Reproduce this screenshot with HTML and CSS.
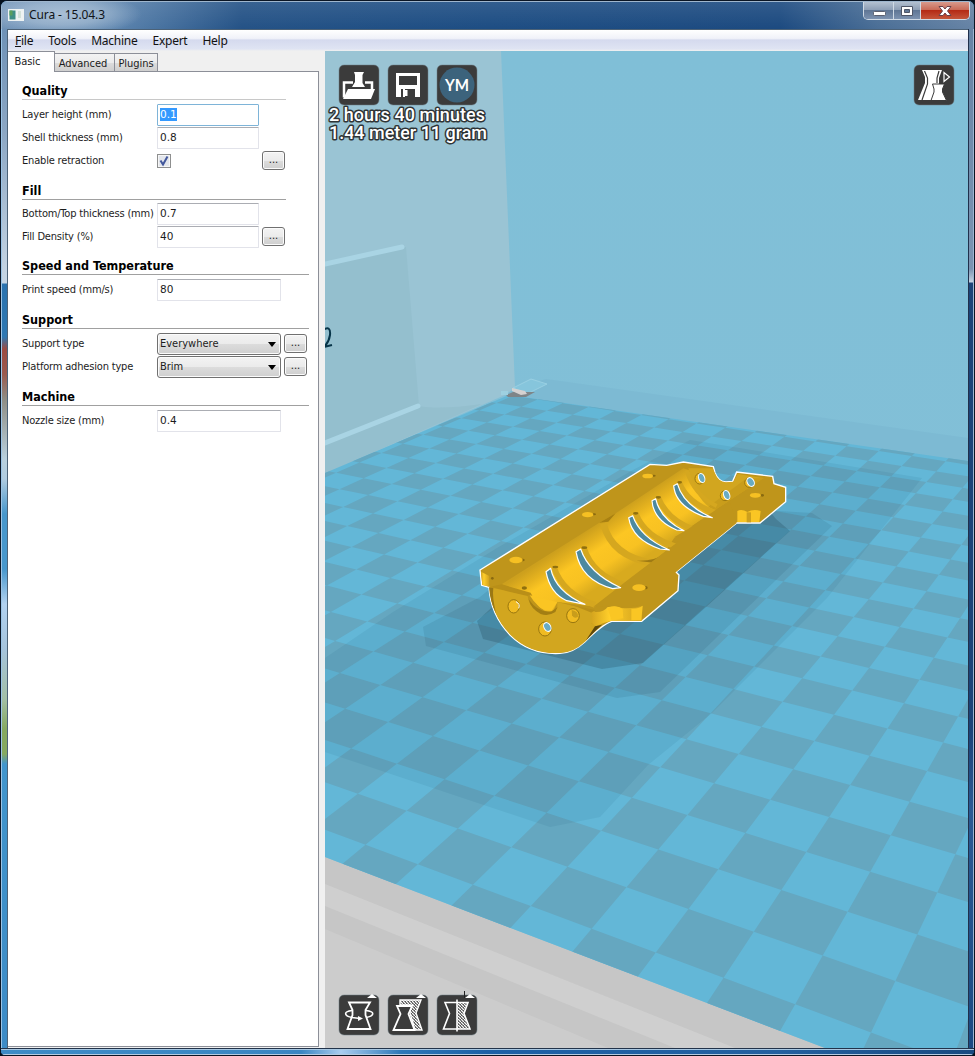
FILE: index.html
```html
<!DOCTYPE html>
<html lang="en">
<head>
<meta charset="utf-8">
<title>Cura - 15.04.3</title>
<link rel="stylesheet" href="styles.css">
</head>
<body>
<div class="window">
  <header class="titlebar">
    <svg class="app-icon" width="16" height="12" viewBox="0 0 16 12"><rect width="16" height="12" fill="#eef3f3"/><rect x="1.500" y="1.500" width="6" height="9" fill="#3f8f86"/><rect x="1.500" y="1.500" width="3" height="5" fill="#5a9f5c"/><path d="M10 2h3v7h-3z" fill="#d4e2da"/></svg>
    <span class="title">Cura - 15.04.3</span>
    <div class="win-buttons">
      <span class="wb wb-min"><svg width="29" height="19"><rect x="9.500" y="9.500" width="12" height="4" rx="1" fill="#fff" stroke="#5b6070"/></svg></span>
      <span class="wb wb-max"><svg width="26" height="19"><path d="M7.500 4.500h11v9h-11zM10.500 7.500v3h5v-3z" fill="#fff" stroke="#4f5668" fill-rule="evenodd"/></svg></span>
      <span class="wb wb-close"><svg width="48" height="19"><path d="M18 4.500h4l2 2.500 2-2.500h4L26.500 9l3.500 4.500h-4L24 11l-2 2.500h-4l3.500-4.500z" fill="#fff" stroke="#68404a"/></svg></span>
    </div>
  </header>
  <div class="body">
    <div class="edge edge-left"></div>
    <div class="client">
      <nav class="menu"><span><u>F</u>ile</span><span>Tools</span><span>Machine</span><span>Expert</span><span>Help</span></nav>
      <div class="main">
        <aside class="side">
          <div class="tabs"><span class="tab tab-on">Basic</span><span class="tab tab-adv">Advanced</span><span class="tab tab-plug">Plugins</span></div>
          <div class="panel">
            <h2 class="narrow light">Quality</h2>
            <div class="row"><label>Layer height (mm)</label><span class="field focus"><mark>0.1</mark></span></div>
            <div class="row"><label>Shell thickness (mm)</label><span class="field">0.8</span></div>
            <div class="row"><label>Enable retraction</label><span class="check"><svg width="14" height="14"><path d="M3.500 6.500L6 10.500 10.500 2.500" fill="none" stroke="#43589c" stroke-width="2"/></svg></span><span class="more">...</span></div>
            <h2 class="narrow snug">Fill</h2>
            <div class="row"><label>Bottom/Top thickness (mm)</label><span class="field">0.7</span></div>
            <div class="row"><label>Fill Density (%)</label><span class="field">40</span><span class="more">...</span></div>
            <h2 class="tight">Speed and Temperature</h2>
            <div class="row"><label>Print speed (mm/s)</label><span class="field wide">80</span></div>
            <h2>Support</h2>
            <div class="row"><label>Support type</label><span class="select">Everywhere</span><span class="more">...</span></div>
            <div class="row"><label>Platform adhesion type</label><span class="select">Brim</span><span class="more">...</span></div>
            <h2>Machine</h2>
            <div class="row"><label>Nozzle size (mm)</label><span class="field wide">0.4</span></div>
          </div>
        </aside>
        <section class="view">
          <svg class="scene" width="643" height="997" viewBox="325 51 643 997">
            <defs>
              <clipPath id="bed"><path d="M325 857L825 1048H968V461L509 395L325 473z"/></clipPath>
              <linearGradient id="back" x1="0" y1="0" x2="0" y2="1"><stop offset="0" stop-color="#80bfd7"/><stop offset="1" stop-color="#84c0d7"/></linearGradient>
              <linearGradient id="chan" gradientUnits="userSpaceOnUse" x1="255" y1="306" x2="342" y2="440"><stop offset="0" stop-color="#cda01d"/><stop offset=".22" stop-color="#e6b31f"/><stop offset=".4" stop-color="#fcc623"/><stop offset=".72" stop-color="#f8c222"/><stop offset="1" stop-color="#d8aa1e"/></linearGradient>
              <linearGradient id="roll" x1="0" y1="0" x2="1" y2="0"><stop offset="0" stop-color="#d5a51e"/><stop offset=".35" stop-color="#ffce2a"/><stop offset="1" stop-color="#d0a01c"/></linearGradient>
            </defs>
            <rect x="325" y="51" width="643" height="997" fill="url(#back)"/>
            <path d="M515 388L546 379L968 438V462L505 395z" fill="#7dbad3"/>
            <path d="M325 51H501L515 388L505 395L325 474z" fill="#9ac4d4"/>
            <path d="M325 262L406 247L419 406Q440 410 482 404L325 474z" fill="#94bfce"/>
            <path d="M325 264L402 247" stroke="#a9d4e4" stroke-width="5" stroke-linecap="round"/>
            <path d="M325 443L418 406" stroke="#a9d4e4" stroke-width="5" stroke-linecap="round"/>
            <path d="M323 330Q331 325 330 335Q329 342 324 347L332 345" fill="none" stroke="#073448" stroke-width="2"/>
            <path d="M325 857L825 1048H325z" fill="#c6c6c6"/>
            <path d="M325 884L735 1048H675L325 906z" fill="#cfcfcf"/>
            <path d="M325 929L608 1048H325z" fill="#cccccc"/>
            <g clip-path="url(#bed)">
              <rect x="325" y="390" width="643" height="658" fill="#63b7d7"/>
              <path id="squares" fill="#65a7c0"/>
              <path d="M325 658L393 612L497 548L633 470L690 440L922 478L827 598L712 713L648 765L600 817L550 827L325 752z" fill="#124a66" opacity=".08"/>
              <path d="M423 627L480 597L600 500L812 513L832 526L660 692L617 698L426 646z" fill="#12394a" opacity=".1"/>
              <path d="M477 621L500 600L760 500L776 519L790 531L706 607L643 663L602 669L483 639z" fill="#102f3c" opacity=".2"/>
            </g>
            <path d="M513 388L531 379L547 384L527 394z" fill="#86c5dc" stroke="#a2d5e6" stroke-width=".7"/>
            <path d="M506 395L513 392H535L526 397H508z" fill="#7e8588"/>
            <path d="M512 388L525 391L527 394L521 395L512 391z" fill="#d5d2d1"/>
            <path d="M501 391h7v4h-7z" fill="#9ed0e0"/>
            <g transform="translate(470 450) scale(.33333)">
              <path d="M30 360L540 43L590 46L640 36L730 50L735 68Q745 95 768 96L788 94L800 66L908 79L912 101L947 112V155L870 219H800L618 366L627 375L624 422L515 514H425Q395 525 345 575Q310 608 270 610Q180 615 120 555Q62 495 57 412L35 406z" fill="#bf951b" stroke="#fff" stroke-width="4"/>
              <path d="M95 403L388 218L437 190L640 55L655 60L740 178L612 265L585 305L375 470L262 456L245 492Q205 480 175 430z" fill="url(#chan)"/>
              <path d="M388 218L437 190L415 215z" fill="#a88012"/>
              <path d="M655 55L728 55L735 70Q745 96 768 97L790 95L803 72L880 84L735 180Q680 160 655 55z" fill="#d2a61f"/>
              <path d="M828 86L882 84L735 180L715 170z" fill="#c99d1b"/>
              <g fill="none" stroke="#d5a71f" stroke-width="17">
                <path d="M252 352Q278 430 375 465"/><path d="M342 294Q368 375 465 405"/>
                <path d="M400 220Q425 320 550 340" stroke-width="20"/><path d="M497 190Q525 262 620 290"/>
                <path d="M564 142Q590 208 670 238"/><path d="M627 96Q650 160 740 190"/><path d="M650 62Q672 135 740 168" stroke-width="12"/>
              </g>
              <path d="M500 332Q550 335 600 305L550 338z" fill="#8c6c11" opacity=".75"/>
              <path d="M585 305L640 263L612 262L650 240L740 178L780 160L800 219L618 366L515 467L370 470L480 385z" fill="#bf951b"/>
              <g fill="#4c89a0" stroke="#fff" stroke-width="3.500" stroke-linejoin="round">
                <path d="M228 365L242 355Q256 425 345 463L290 452Q240 430 228 365z"/>
                <path d="M318 305L332 297Q356 370 452 413L428 416Q332 390 318 305z"/>
                <path d="M476 203L488 197Q510 262 598 300L570 297Q486 268 476 203z"/>
                <path d="M546 152L557 146Q570 207 642 242L620 240Q550 210 546 152z"/>
                <path d="M611 107L622 101Q640 167 727 203L700 199Q616 167 611 107z"/>
              </g>
              <g fill="#90700f"><ellipse cx="256" cy="351" rx="9" ry="4"/><ellipse cx="343" cy="293" rx="9" ry="4"/><ellipse cx="497" cy="190" rx="8" ry="4"/><ellipse cx="565" cy="142" rx="8" ry="4"/><ellipse cx="629" cy="97" rx="7" ry="4"/><ellipse cx="163" cy="414" rx="8" ry="5"/></g>
              <path d="M62 410L95 403L182 428L187 437L175 435L173 440L100 421z" fill="#b98f18"/>
              <path d="M59 412L100 421L173 438Q177 480 230 495L262 475V456L300 464L375 484L365 522L395 524L345 575Q310 608 270 609Q180 613 121 554Q62 493 59 412z" fill="#d2a61f"/>
              <path d="M57 412L70 414Q66 440 78 490Q60 455 57 412z" fill="#9b7814"/>
              <path d="M176 448Q205 490 245 484L262 472L256 486Q235 500 212 492Q182 476 176 448z" fill="#a37e13"/>
              <path d="M190 440L262 456L245 482Q205 484 190 440z" fill="#fac523"/>
              <path d="M262 456L375 480L365 488L320 470z" fill="#b98f18"/>
              <path d="M33 365L58 378V410L37 405z" fill="url(#roll)"/>
              <path d="M365 485Q400 490 412 472Q435 466 455 474Q490 477 518 467L515 512H425Q400 517 378 529L365 520z" fill="url(#roll)"/>
              <path d="M412 474Q440 462 458 478L460 505L425 510z" fill="#fac624"/><path d="M484 476Q505 477 518 467L514 511H484z" fill="#fac624"/>
              <path d="M347 572L375 529L396 524Q378 540 347 572z" fill="#5e480b"/>
              <path d="M802 183Q815 176 832 186Q850 176 872 183L868 216H802z" fill="#fac624"/><path d="M830 187h13v30h-13z" fill="#cda01d"/>
              <g fill="#8a6a10"><ellipse cx="158" cy="330" rx="6" ry="4"/><ellipse cx="372" cy="193" rx="6" ry="3"/><ellipse cx="551" cy="77" rx="6" ry="3"/><ellipse cx="527" cy="413" rx="6" ry="5"/><ellipse cx="877" cy="136" rx="5" ry="4"/><ellipse cx="67" cy="385" rx="4" ry="4"/></g>
              <g fill="#f6c023"><ellipse cx="138" cy="330" rx="20" ry="10"/><ellipse cx="353" cy="194" rx="17" ry="8"/><ellipse cx="533" cy="78" rx="16" ry="7"/><ellipse cx="507" cy="413" rx="20" ry="10"/><ellipse cx="856" cy="136" rx="16" ry="7"/></g>
              <g fill="#f0bb22" stroke="#98750f" stroke-width="3"><ellipse cx="131" cy="469" rx="17" ry="20"/><ellipse cx="225" cy="537" rx="19" ry="21"/><ellipse cx="309" cy="497" rx="19" ry="21"/><ellipse cx="689" cy="86" rx="14" ry="16"/><ellipse cx="765" cy="137" rx="14" ry="15"/><ellipse cx="838" cy="98" rx="14" ry="14"/></g>
              <path d="M305 480Q326 484 324 500Q312 508 306 496z" fill="#c99d1b"/>
              <g fill="#69abc3" stroke="#fff" stroke-width="3"><ellipse cx="232" cy="531" rx="10" ry="14" transform="rotate(-30 232 531)"/><ellipse cx="695" cy="84" rx="9" ry="14" transform="rotate(-20 695 84)"/><ellipse cx="770" cy="135" rx="9" ry="14" transform="rotate(-20 770 135)"/><ellipse cx="842" cy="96" rx="10" ry="14" transform="rotate(-30 842 96)"/></g>
              <path d="M138 455Q152 462 146 475" fill="none" stroke="#fff" stroke-width="3"/>
            </g>
            <g class="stats"><text x="329" y="121" textLength="156">2 hours 40 minutes</text><text x="329" y="139" textLength="158">1.44 meter 11 gram</text></g>
          </svg>
          <div class="tools tools-top">
            <svg width="40" height="40"><rect class="tile" width="40" height="40" rx="5"/><path d="M15 7h10l-1.500 3v8l2.500 4H13l3-5v-7z" fill="#fff"/><path d="M14 17.500H5v15M26 17.500h7v7" fill="none" stroke="#fff" stroke-width="2.500"/><path d="M9 24h27l-4 10H4z" fill="#fff"/></svg>
            <svg width="40" height="40"><rect class="tile" width="40" height="40" rx="5"/><path d="M8 8h24v24h-5v-8H17v8h-2v-8h-2v8H8zM11 11v9h18v-9z" fill="#fff" fill-rule="evenodd"/><path d="M17 25h2.500v6H17z" fill="#fff"/></svg>
            <svg width="40" height="40"><rect class="tile" width="40" height="40" rx="5"/><circle cx="20" cy="20" r="17.500" fill="#3c637c"/><text class="ym" x="20" y="26" text-anchor="middle" textLength="24" lengthAdjust="spacingAndGlyphs">YM</text></svg>
          </div>
          <div class="tools tools-view">
            <svg width="40" height="40"><rect class="tile" width="40" height="40" rx="5"/><path d="M8 5h20l-3 8v6l3 16H4l7-17v-6z" fill="#fff"/><path d="M10.500 6l3 7v6L8 35M25 6l-2 7v5" fill="none" stroke="#3b3b3b" stroke-width="1.200"/><path d="M18.500 19h12l-2 5v3l4 8.500H17l3-8.500v-3z" fill="#fff" stroke="#3b3b3b" stroke-width="1"/><path d="M30 7.500v9l5.500-4.500z" fill="none" stroke="#fff" stroke-width="1.200"/></svg>
          </div>
          <div class="tools tools-bottom">
            <svg width="40" height="40"><rect class="tile" width="40" height="40" rx="5"/><path d="M10 7.500h21l-4.500 7.500v5l5 14H8.500l5-14v-5z" fill="none" stroke="#fff" stroke-width="1.800"/><path d="M13 15.500C4.500 16.500 4.500 20.500 13 22.500L21 23.500M27 15.500C36 16.500 36 20.500 27 22.500" fill="none" stroke="#fff" stroke-width="1.600"/><path d="M19 21l5 2.500-5 2.500z" fill="#fff"/><path d="M28 3l5-4 5 4z" fill="#fff"/></svg>
            <svg width="40" height="40"><defs><pattern id="hatch" width="3" height="3" patternUnits="userSpaceOnUse"><rect width="3" height="3" fill="#555"/><path d="M0 0L3 3" stroke="#fff" stroke-width="1.200"/></pattern></defs><rect class="tile" width="40" height="40" rx="5"/><path d="M12 5h21l-5 13 6 17h-7l-5-17 1-8H12z" fill="url(#hatch)" stroke="#fff" stroke-width="1.400"/><path d="M9 11h15l-3.500 8 6 16H5.500l7-16z" fill="#3b3b3b" stroke="#fff" stroke-width="1.800"/><path d="M28 3l5-4 5 4z" fill="#fff"/></svg>
            <svg width="40" height="40"><rect class="tile" width="40" height="40" rx="5"/><path d="M20 7h10l-3 11 5 16H20z" fill="url(#hatch)"/><path d="M8 7.500h23l-4 11 6 15.500H6.500l6-15.500z" fill="none" stroke="#fff" stroke-width="1.600"/><path d="M20 4.500v32" stroke="#fff" stroke-width="1.600"/><path d="M27.500-4v7" stroke="#222"/><path d="M28 3l5-4 5 4z" fill="#fff"/></svg>
          </div>
        </section>
      </div>
    </div>
    <div class="edge edge-right"></div>
  </div>
  <div class="edge-bottom"></div>
</div>
<script src="bed.js"></script>
</body>
</html>
```
FILE: bed.js
```js
// Perspective of the print bed: grid corner (u, v) -> view position (x, y).
const anchors = [
  [3, 1, 870.7, 1032], [2, 1, 795, 1004], [0, 0, 689.7, 909.3], [3, 0, 895.7, 981.3],
  [-5, 1, 365.3, 845], [-4, 0, 457.3, 828.3], [-6, 0, 357.3, 793.3], [-5, -3, 512.3, 723.3],
  [-8, -3, 380.7, 684.7], [-7, -3, 422.7, 697.7], [0, -8, 869, 667.7], [1, -8, 919.3, 680],
  [-3, -8, 728.3, 635.7], [0, -11, 913, 608.7], [0, -14, 951, 559], [0, -5, 814.3, 740.7],
  [-1, -1, 658.3, 849.7]
];

// Least-squares fit of the eight homography coefficients.
function fit(points) {
  const m = Array.from({ length: 8 }, () => new Array(9).fill(0));
  for (const [u, v, x, y] of points) {
    for (const r of [[u, v, 1, 0, 0, 0, -u * x, -v * x, x], [0, 0, 0, u, v, 1, -u * y, -v * y, y]]) {
      for (let i = 0; i < 8; i++) for (let j = 0; j < 9; j++) m[i][j] += r[i] * r[j];
    }
  }
  for (let c = 0; c < 8; c++) {
    let p = c;
    for (let r = c + 1; r < 8; r++) if (Math.abs(m[r][c]) > Math.abs(m[p][c])) p = r;
    [m[c], m[p]] = [m[p], m[c]];
    for (let r = 0; r < 8; r++) {
      if (r === c) continue;
      const f = m[r][c] / m[c][c];
      for (let j = c; j < 9; j++) m[r][j] -= f * m[c][j];
    }
  }
  return m.map((row, i) => row[8] / row[i]);
}

const h = fit(anchors);
function project(u, v) {
  const w = h[6] * u + h[7] * v + 1;
  return w > 0.05
    ? ((h[0] * u + h[1] * v + h[2]) / w).toFixed(1) + " " + ((h[3] * u + h[4] * v + h[5]) / w).toFixed(1)
    : null;
}

let d = "";
for (let u = -22; u < 8; u++) {
  for (let v = -26; v < 4; v++) {
    if ((u + v) % 2 !== 0) continue;
    const c = [project(u, v), project(u + 1, v), project(u + 1, v + 1), project(u, v + 1)];
    if (c.every(Boolean)) d += "M" + c.join("L") + "z";
  }
}
document.getElementById("squares").setAttribute("d", d);
```
FILE: styles.css
```css
* { box-sizing: border-box; }
body { margin: 0; background: #06101c; font-family: "DejaVu Sans Condensed", "DejaVu Sans", sans-serif; font-size: 11px; color: #1c1c1c; }
.window { width: 975px; height: 1056px; display: flex; flex-direction: column; border: 1px solid #0a1524; border-radius: 7px 7px 5px 5px; overflow: hidden; background: #3a80ba; }
.titlebar { height: 28px; flex: none; display: flex; align-items: flex-start; padding-left: 6px; border-top: 1px solid #9fb6cd; border-left: 1px solid #9fb6cd; background: radial-gradient(ellipse 80px 22px at 60px 12px, #a9bfd5 0, #a9bfd5aa 50%, transparent), linear-gradient(#ffffff18, transparent), linear-gradient(90deg, #6f92b7 0, #5d85af 110px, #245286 240px, #1d4d83 50%, #1c4a80 80%, #4a6e96 90%, #6683a5); }
.app-icon { margin-top: 7px; }
.title { flex: 1; margin: 4px 0 0 5px; font: 12px "Noto Sans", sans-serif; letter-spacing: -.1px; color: #101418; }
.win-buttons { display: flex; height: 18px; margin-right: 4px; border: 1px solid #d0dae5; border-top: 0; border-radius: 0 0 5px 5px; overflow: hidden; }
.wb { background: linear-gradient(#b3c0d0 0, #8e9fb6 45%, #5d7493 46%, #7c92b0); border-right: 1px solid #d0dae5; }
.wb-min { width: 30px; } .wb-max { width: 27px; }
.wb-close { width: 48px; border: 0; background: linear-gradient(#d89a8c 0, #c96b58 45%, #b32712 46%, #c4553a); }
.body { flex: 1; display: flex; min-height: 0; }
.edge { flex: none; }
.edge-left { width: 7px; border-left: 1px solid #9cc4e6; border-right: 1px solid #4c6277; background: linear-gradient(#6f92b7 0, #8ba6c3 100px, #c3d3e2 240px, #c5d5e4 254px, #2a72ae 255px, #2f78b2 308px, #9c4b42 320px, #9b5a4e 345px, #8f8d84 370px, #b9d0dd 430px, #b0cce0 450px, #4797cc 485px, #4797cc 540px, #b2d2f0 575px, #a6c4dc 620px, #a3bfa6 670px, #86a960 700px, #86a960 725px, #4195cc 735px, #3d8bc6); }
.edge-right { width: 6px; border-left: 1px solid #20304c; border-right: 1px solid #9db6d2; background: linear-gradient(#6683a5, #7b94b2 240px, #c4d2e2 253px, #1b4378 254px, #1b4378 700px, #2b5a94 780px, #1b4a82); }
.edge-bottom { height: 7px; flex: none; border-top: 1px solid #22334a; border-bottom: 1px solid #b5cbe1; background: linear-gradient(90deg, #3d8bc6 0, #3a86c2 300px, #a9cdf0 340px, #2d78b8 400px, #1c60a6 50%, #24609f 80%, #184a80); box-shadow: inset 0 1px #a9c8e2; }
.client { flex: 1; min-width: 0; display: flex; flex-direction: column; background: #f0f0f0; border-top: 1px solid #4c6277; }
.menu { height: 21px; flex: none; display: flex; gap: 15px; padding: 3px 0 0 7px; font: 12px/16px "Noto Sans", sans-serif; letter-spacing: -.25px; color: #111; background: linear-gradient(#fff 0, #f0f2f9 40%, #d5daee 48%, #dfe4f3 90%, #f0f0f0); }
.main { flex: 1; display: flex; min-height: 0; }
.side { width: 311px; flex: none; display: flex; flex-direction: column; }
.tabs { height: 20px; flex: none; display: flex; align-items: flex-end; }
.tab { height: 18px; border: 1px solid #8c8f98; border-bottom: 0; background: linear-gradient(#f3f3f3, #ebebeb 50%, #dcdcdc 51%, #cfcfcf); line-height: 19px; letter-spacing: -.05px; text-align: center; white-space: nowrap; }
.tab-on { width: 47px; height: 21px; margin-bottom: -1px; background: #fff; border-left: 0; padding-right: 7px; line-height: 19px; z-index: 1; }
.tab-adv { width: 60px; border-left: 0; padding-right: 3px; }
.tab-plug { width: 43px; border-left: 0; }
.panel { flex: 1; background: #fff; border: 1px solid #8c8f98; border-left: 0; padding-left: 14px; margin-bottom: 1px; }
h2 { width: 287px; height: 28px; margin: 0 0 3px; padding-top: 11px; border-bottom: 1px solid #a0a0a0; font: bold 12.500px/16px "DejaVu Sans Condensed", sans-serif; color: #000; }
h2.narrow { width: 264px; }
h2.light { border-color: #c8c8c8; }
h2.snug { margin-bottom: 2px; }
h2.tight { height: 27px; padding-top: 10px; }
.row { height: 23px; display: flex; align-items: center; }
.row label { width: 135px; flex: none; white-space: nowrap; letter-spacing: -.18px; }
.field { width: 102px; height: 22px; padding: 3px 2px; border: 1px solid #e2e3ea; border-top-color: #abadb3; border-radius: 1px; font: 10.500px/13px "DejaVu Sans", sans-serif; }
.field.focus { border-color: #7eb4d8; }
.field mark { display: inline-block; background: #3399ff; color: #fff; }
.field.wide { width: 124px; }
.check { width: 14px; height: 14px; margin-right: 88px; border: 1px solid #8e8f8f; background: #e3e6ec; box-shadow: inset 0 0 0 1px #f6f6f6; }
.check svg { display: block; margin: -1px; }
.more { width: 23px; height: 19px; margin-left: 3px; border: 1px solid #707070; border-radius: 3px; background: linear-gradient(#f3f3f3, #ebebeb 50%, #dcdcdc 51%, #cfcfcf); box-shadow: inset 0 0 0 1px #fbfbfb; text-align: center; line-height: 16px; }
.select { position: relative; width: 124px; height: 22px; padding: 0 2px; border: 1px solid #707070; border-radius: 3px; background: linear-gradient(#f3f3f3, #ebebeb 50%, #dcdcdc 51%, #cfcfcf); box-shadow: inset 0 0 0 1px #fbfbfb; line-height: 20px; }
.select::after { content: ""; position: absolute; right: 4px; top: 8px; border: 4px solid transparent; border-top: 5px solid #000; border-bottom: 0; }
.view { position: relative; width: 643px; margin-left: 6px; flex: none; }
.scene { display: block; }
.stats { font: 500 18px Roboto, sans-serif; fill: #fff; stroke: #2f3436; stroke-width: 3px; paint-order: stroke; stroke-linejoin: round; }
.tools { position: absolute; display: flex; gap: 9px; }
.tools svg { overflow: visible; }
.tools-top { left: 14px; top: 14px; }
.tools-view { right: 14px; top: 14px; }
.tools-bottom { left: 14px; top: 944px; }
.tile { fill: #3b3b3b; stroke: #6f7f86; stroke-width: .5px; }
.ym { font: bold 17px Lato, sans-serif; fill: #fff; }
```
